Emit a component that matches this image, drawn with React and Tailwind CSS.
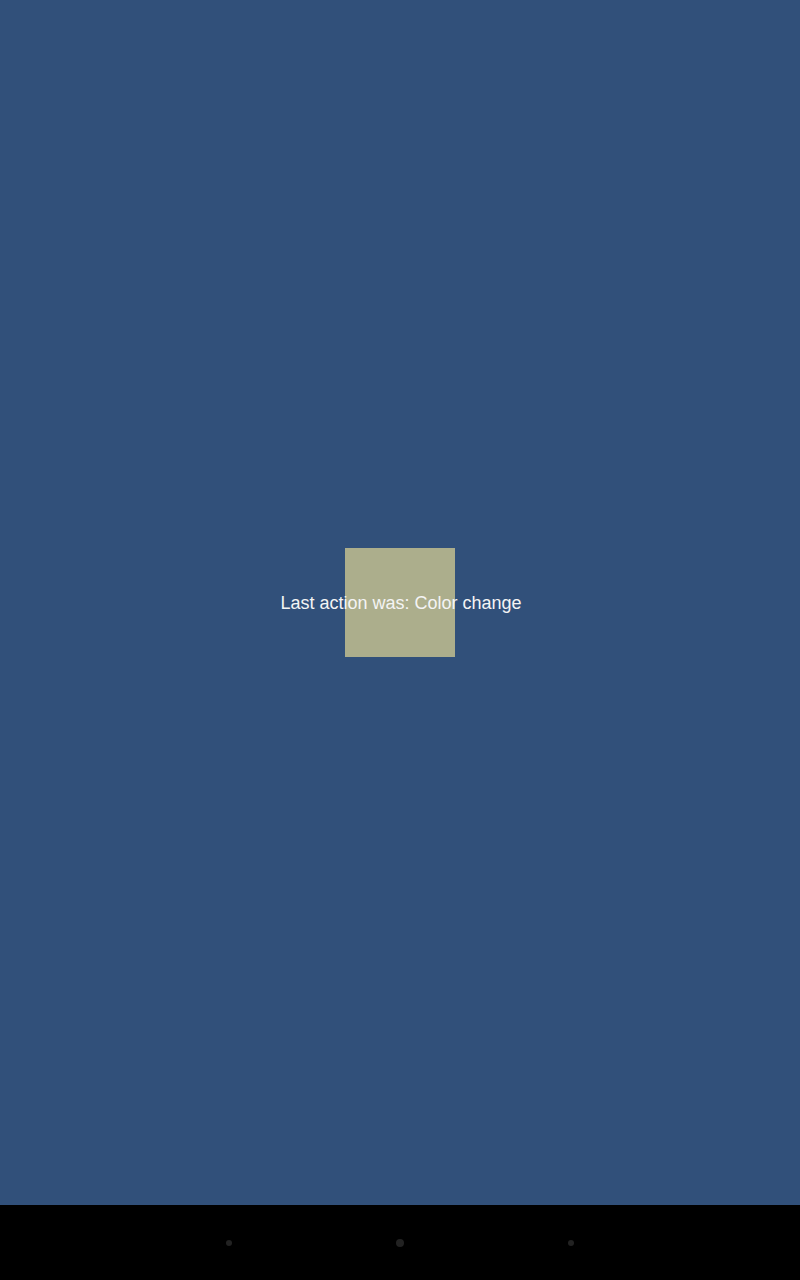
import React from 'react';

const App = () => {
  return (
    <div className="w-[800px] h-[1280px] flex flex-col" style={{ fontFamily: '"Liberation Sans", Arial, sans-serif' }}>
      {/* area principal */}
      <main className="h-[1205px] bg-[#31507a] grid place-items-center">
        <div className="col-start-1 row-start-1 w-[110px] h-[109px] bg-[#acae8c]"></div>
        <p className="col-start-1 row-start-1 text-[18px] leading-none text-[#f4f4f4] pl-[2px]">Last action was: Color change</p>
      </main>

      {/* barra de navegación */}
      <nav className="flex-1 bg-black flex items-center justify-center gap-[164px]">
        <span className="w-[6px] h-[6px] rounded-full bg-[#222]"></span>
        <span className="w-[8px] h-[8px] rounded-full bg-[#222]"></span>
        <span className="w-[6px] h-[6px] rounded-full bg-[#222]"></span>
      </nav>
    </div>
  );
};

export default App;
